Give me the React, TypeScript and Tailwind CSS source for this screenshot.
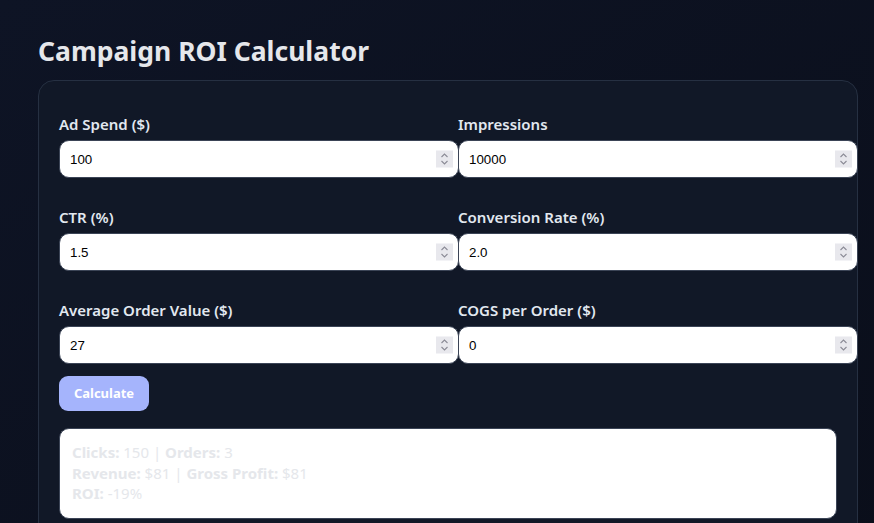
import React from "react";

const fields: { label: string; value: string }[] = [
  { label: "Ad Spend ($)", value: "100" },
  { label: "Impressions", value: "10000" },
  { label: "CTR (%)", value: "1.5" },
  { label: "Conversion Rate (%)", value: "2.0" },
  { label: "Average Order Value ($)", value: "27" },
  { label: "COGS per Order ($)", value: "0" },
];

function Spinner() {
  return (
    <div className="pointer-events-none absolute right-[6px] top-1/2 -translate-y-1/2 flex h-[17px] w-[17px] items-center justify-center bg-[#e8e8ed]">
      <svg width="9" height="13" viewBox="0 0 9 13" fill="none">
        <path d="M1.5 4.5 L4.5 1.5 L7.5 4.5" stroke="#8b8b96" strokeWidth="1.1" />
        <path d="M1.5 8.5 L4.5 11.5 L7.5 8.5" stroke="#8b8b96" strokeWidth="1.1" />
      </svg>
    </div>
  );
}

export default function App() {
  return (
    <div
      className="min-h-screen w-full bg-gradient-to-br from-[#0e1425] to-[#0a0e1a] px-[38px] pt-[34px] pb-6"
      style={{ fontFamily: '"Noto Sans", "Open Sans", sans-serif' }}
    >
      <h1 className="text-[26.5px] leading-[34px] font-bold text-[#e5e7eb] mb-[12px]">
        Campaign ROI Calculator
      </h1>
      <div className="w-[820px] rounded-[16px] border border-[#263042] bg-[#111827] px-[20px] pt-[33px] pb-[20px]">
        <div className="grid grid-cols-2 gap-x-[20px] gap-y-[29px] w-[778px]">
          {fields.map((f) => (
            <div key={f.label} className="flex flex-col">
              <label className="text-[15px] leading-[20px] font-semibold text-[#e2e8f0] mb-[6px]">
                {f.label}
              </label>
              <div className="relative w-[400px] h-[38px]">
                <input
                  type="number"
                  defaultValue={f.value}
                  className="block w-full h-full rounded-[10px] border border-[#3b4456] bg-white pl-[10px] pr-[28px] text-[13.33px] text-black outline-none [appearance:textfield] [&::-webkit-inner-spin-button]:appearance-none [&::-webkit-outer-spin-button]:appearance-none"
                  style={{ fontFamily: '"Liberation Sans", Arial, sans-serif' }}
                />
                <Spinner />
              </div>
            </div>
          ))}
        </div>
        <button className="mt-[12px] h-[35px] w-[90px] rounded-[9px] bg-[#a5b4fc] text-[13px] font-bold text-white">
          Calculate
        </button>
        <div className="mt-[17px] w-[778px] rounded-[10px] border border-[#3b4456] bg-white px-[12px] pt-[13px] pb-[14px] text-[15px] leading-[20.5px] text-[#e5e7eb]">
          <div>
            <b>Clicks:</b> 150 | <b>Orders:</b> 3
          </div>
          <div>
            <b>Revenue:</b> $81 | <b>Gross Profit:</b> $81
          </div>
          <div>
            <b>ROI:</b> -19%
          </div>
        </div>
      </div>
    </div>
  );
}
